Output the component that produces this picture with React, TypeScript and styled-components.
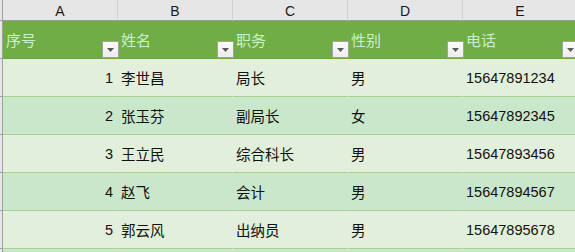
import React from "react";
import styled, { createGlobalStyle } from "styled-components";

const Global = createGlobalStyle`
  html, body { margin: 0; padding: 0; background: #ffffff; }
  body { font-family: "Liberation Sans", "Noto Sans CJK SC", sans-serif; }
`;

const Sheet = styled.div`
  width: 575px;
  height: 252px;
  overflow: hidden;
  background: #ffffff;
`;

const Row = styled.div<{ $h: number }>`
  display: flex;
  height: ${(p) => p.$h}px;
  width: 578px;
`;

const RowHead = styled.div<{ $line?: boolean }>`
  flex: 0 0 3px;
  box-sizing: border-box;
  background: #e6e6e6;
  border-right: 1px solid #a0a0a0;
  border-bottom: ${(p) => (p.$line ? "1px solid #a0a0a0" : "none")};
`;

const ColHead = styled.div`
  flex: 0 0 115px;
  box-sizing: border-box;
  background: #e6e6e6;
  border-right: 1px solid #d0d0d0;
  border-bottom: 1px solid #9c9c9c;
  display: flex;
  align-items: center;
  justify-content: center;
  font-family: "Liberation Sans", sans-serif;
  font-size: 14px;
  color: #1a1a1a;
  padding-top: 1px;
`;

const HeadCell = styled.div`
  position: relative;
  flex: 0 0 115px;
  box-sizing: border-box;
  background: #70ad47;
  border-bottom: 1px solid #6aa643;
  display: flex;
  align-items: center;
  padding-left: 3px;
  font-family: "Liberation Sans", "Noto Sans CJK SC", sans-serif;
  font-size: 15px;
  color: #c9f0cc;
`;

const Filter = styled.div`
  position: absolute;
  right: -1px;
  bottom: 0px;
  width: 17px;
  height: 17px;
  box-sizing: border-box;
  border: 1px solid #a3a3a3;
  background: linear-gradient(#fbfbfb, #ececec);
  display: flex;
  align-items: center;
  justify-content: center;
  z-index: 2;
`;

const Cell = styled.div<{ $band: boolean; $align?: "left" | "right" }>`
  flex: 0 0 115px;
  box-sizing: border-box;
  background: ${(p) => (p.$band ? "#c9e8cb" : "#e2efda")};
  border-bottom: 1px solid #a9d08e;
  border-right: 1px solid ${(p) => (p.$band ? "#d3e2d0" : "transparent")};
  display: flex;
  align-items: center;
  justify-content: ${(p) => (p.$align === "right" ? "flex-end" : "flex-start")};
  padding: ${(p) => (p.$align === "right" ? "0 4px 0 0" : "0 0 0 3px")};
  font-family: "Liberation Sans", "Noto Sans CJK SC", sans-serif;
  font-size: 14.5px;
  color: #111111;
  white-space: nowrap;
`;

const cols = ["A", "B", "C", "D", "E"];
const heads = ["序号", "姓名", "职务", "性别", "电话"];
const data = [
  ["1", "李世昌", "局长", "男", "15647891234"],
  ["2", "张玉芬", "副局长", "女", "15647892345"],
  ["3", "王立民", "综合科长", "男", "15647893456"],
  ["4", "赵飞", "会计", "男", "15647894567"],
  ["5", "郭云风", "出纳员", "男", "15647895678"],
  ["", "", "", "", ""],
];

const Arrow = () => (
  <svg width="7" height="4" viewBox="0 0 7 4">
    <path d="M0 0 H7 L3.5 4 Z" fill="#5a5a5a" />
  </svg>
);

export default function App() {
  return (
    <Sheet>
      <Global />
      <Row $h={21}>
        <RowHead $line />
        {cols.map((c) => (
          <ColHead key={c}>{c}</ColHead>
        ))}
      </Row>
      <Row $h={38}>
        <RowHead $line />
        {heads.map((h) => (
          <HeadCell key={h}>
            {h}
            <Filter>
              <Arrow />
            </Filter>
          </HeadCell>
        ))}
      </Row>
      {data.map((r, i) => (
        <Row $h={38} key={i}>
          <RowHead $line />
          {r.map((v, j) => (
            <Cell key={j} $band={i % 2 === 1} $align={j === 0 ? "right" : "left"}>
              {v}
            </Cell>
          ))}
        </Row>
      ))}
    </Sheet>
  );
}
